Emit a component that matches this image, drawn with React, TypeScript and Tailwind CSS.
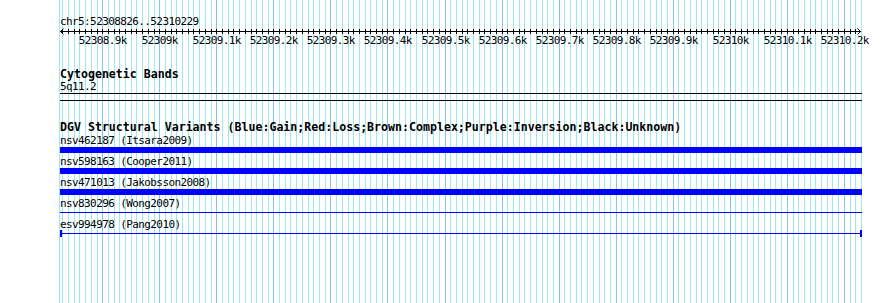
import React from "react";

const START = 52308826;
const SCALE = 0.5705;
const X0 = 60;
const px = (bp: number) => Math.round(X0 + (bp - START) * SCALE);

const ticks: number[] = [];
for (let bp = 52308830; bp <= 52310220; bp += 10) ticks.push(bp);
const majors = ticks.filter((b) => b % 100 === 0);

const label = (bp: number) => {
  const k = bp / 1000;
  return (Number.isInteger(k) ? String(k) : k.toFixed(1)) + "k";
};

const features = [
  { name: "nsv462187 (Itsara2009)", kind: "thick" },
  { name: "nsv598163 (Cooper2011)", kind: "thick" },
  { name: "nsv471013 (Jakobsson2008)", kind: "thick" },
  { name: "nsv830296 (Wong2007)", kind: "thin" },
  { name: "esv994978 (Pang2010)", kind: "capped" },
];

const MINOR = "#9ee8ee";
const MAJOR = "#84c4ee";

function Grid() {
  return (
    <svg className="absolute inset-0" width={890} height={303} shapeRendering="crispEdges">
      <line x1={59.5} x2={59.5} y1={0} y2={303} stroke={MINOR} strokeWidth={1} />
      <line x1={861.5} x2={861.5} y1={0} y2={303} stroke={MINOR} strokeWidth={1} />
      {ticks.map((bp) => (
        <line
          key={bp}
          x1={px(bp) + 0.5}
          x2={px(bp) + 0.5}
          y1={0}
          y2={303}
          stroke={bp % 100 === 0 ? MAJOR : MINOR}
          strokeWidth={1}
        />
      ))}
    </svg>
  );
}

function Ruler() {
  return (
    <svg width={890} height={19} className="block" shapeRendering="crispEdges">
      <line x1={60} x2={861} y1={4.5} y2={4.5} stroke="#000" strokeWidth={1} />
      <polyline points="63.5,1.5 60.5,4.5 63.5,7.5" fill="none" stroke="#000" strokeWidth={1} shapeRendering="auto" />
      <polyline points="857.5,1.5 860.5,4.5 857.5,7.5" fill="none" stroke="#000" strokeWidth={1} shapeRendering="auto" />
      {ticks.map((bp) => (
        <line key={bp} x1={px(bp) + 0.5} x2={px(bp) + 0.5} y1={2} y2={7} stroke="#000" strokeWidth={1} />
      ))}
      {majors.map((bp) => (
        <text
          key={bp}
          x={px(bp) + 0.8}
          y={16.5}
          textAnchor="middle"
          fontSize={11}
          letterSpacing={-0.6}
          fill="#000"
          style={{ fontFamily: "'DejaVu Sans Mono', 'Liberation Mono', monospace" }}
        >
          {label(bp)}
        </text>
      ))}
    </svg>
  );
}

export default function App() {
  return (
    <div className="relative w-[890px] h-[303px] overflow-hidden bg-white text-black font-['DejaVu_Sans_Mono','Liberation_Mono',monospace]">
      <Grid />
      <div className="relative flex flex-col">
        <div className="pl-[60px] pt-[16px] h-[27px] text-[11px] tracking-[-0.6px] leading-[11px] whitespace-nowrap">
          chr5:52308826..52310229
        </div>
        <Ruler />
        <div className="mt-[22px] pl-[60px] h-[13px] text-[11.6px] leading-[12px] font-bold whitespace-nowrap">
          Cytogenetic Bands
        </div>
        <div className="pl-[60px] h-[11px] text-[11px] tracking-[-0.6px] leading-[11px] whitespace-nowrap">5q11.2</div>
        <div className="mt-[1px] ml-[60px] w-[802px] h-[8px] border-y border-black" />
        <div className="mt-[20px] pl-[60px] h-[13px] text-[11.6px] leading-[12px] font-bold whitespace-nowrap">
          DGV Structural Variants (Blue:Gain;Red:Loss;Brown:Complex;Purple:Inversion;Black:Unknown)
        </div>
        <div className="mt-[2px] flex flex-col">
          {features.map((f) => (
            <div key={f.name} className="flex flex-col h-[21px]">
              <div className="pl-[60px] h-[11px] text-[11px] tracking-[-0.6px] leading-[9px] whitespace-nowrap">{f.name}</div>
              <div className="ml-[60px] w-[802px] h-[6px]">
                {f.kind === "thick" && <div className="h-[6px] bg-[#0000ff]" />}
                {f.kind === "thin" && <div className="mt-[2px] h-px bg-[#0000ff]" />}
                {f.kind === "capped" && (
                  <div className="-mt-px h-[7px] flex items-center">
                    <div className="w-[2px] h-[7px] bg-[#0000ff]" />
                    <div className="flex-1 h-px bg-[#0000ff]" />
                    <div className="w-[2px] h-[7px] bg-[#0000ff]" />
                  </div>
                )}
              </div>
            </div>
          ))}
        </div>
      </div>
    </div>
  );
}
